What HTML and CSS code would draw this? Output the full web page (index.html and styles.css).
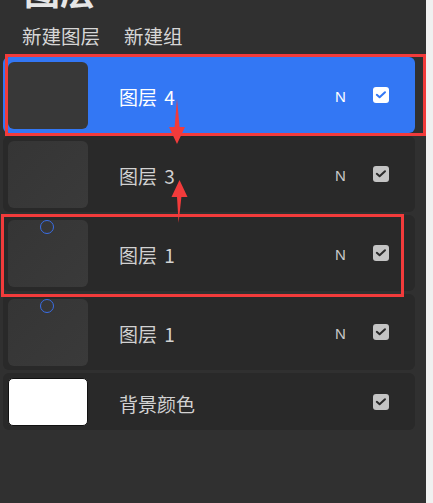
FILE: index.html
```html
<!DOCTYPE html>
<html lang="zh">
<head>
<meta charset="utf-8">
<link rel="stylesheet" href="styles.css">
</head>
<body>
<div class="page">
  <div class="main">
    <div class="title">图层</div>
    <div class="toolbar"><span>新建图层</span><span>新建组</span></div>
    <div class="list">
      <div class="row active">
        <div class="thumb"></div>
        <div class="name">图层 4</div>
        <div class="mode">N</div>
        <div class="check"><svg viewBox="0 0 16 16"><path d="M3.8 7.8 L6.6 10.2 L12 5.2"/></svg></div>
      </div>
      <div class="row">
        <div class="thumb"></div>
        <div class="name">图层 3</div>
        <div class="mode">N</div>
        <div class="check"><svg viewBox="0 0 16 16"><path d="M3.8 7.8 L6.6 10.2 L12 5.2"/></svg></div>
      </div>
      <div class="row">
        <div class="thumb"><span class="dot"></span></div>
        <div class="name">图层 1</div>
        <div class="mode">N</div>
        <div class="check"><svg viewBox="0 0 16 16"><path d="M3.8 7.8 L6.6 10.2 L12 5.2"/></svg></div>
      </div>
      <div class="row">
        <div class="thumb"><span class="dot"></span></div>
        <div class="name">图层 1</div>
        <div class="mode">N</div>
        <div class="check"><svg viewBox="0 0 16 16"><path d="M3.8 7.8 L6.6 10.2 L12 5.2"/></svg></div>
      </div>
      <div class="row bg">
        <div class="thumb white"></div>
        <div class="name">背景颜色</div>
        <div class="mode hidden">N</div>
        <div class="check"><svg viewBox="0 0 16 16"><path d="M3.8 7.8 L6.6 10.2 L12 5.2"/></svg></div>
      </div>
    </div>
  </div>
  <div class="strip"></div>

  <div class="mark mark-a"></div>
  <div class="mark mark-b"></div>
  <svg class="arrows" width="433" height="503" viewBox="0 0 433 503">
    <polygon points="177,99 179.6,127 185,127 177,144 169,127 174.6,127"/>
    <polygon points="179.5,180 187.5,197 181.4,197 178.6,223 177,197 171.5,197"/>
  </svg>
</div>
</body>
</html>
```
FILE: styles.css
```css
* { box-sizing: border-box; }
html, body { margin: 0; padding: 0; }
body {
  background: #f0f0f0;
  font-family: "Noto Sans CJK SC", "Noto Sans", sans-serif;
}
.page {
  position: relative;
  display: flex;
  width: 433px;
  height: 503px;
  overflow: hidden;
}
.main {
  width: 426px;
  height: 503px;
  background: #303030;
  display: flex;
  flex-direction: column;
}
.strip { flex: 1; background: #f0f0f0; }

.title {
  margin-top: -29px;
  margin-left: 24px;
  font-size: 36px;
  line-height: 36px;
  font-weight: 700;
  color: #e6e6e6;
}
.toolbar {
  margin-top: 19px;
  margin-left: 22px;
  display: flex;
  gap: 24px;
  font-size: 19.5px;
  line-height: 20px;
  color: #d6d6d6;
}
.list {
  margin-top: 11px;
  margin-left: 3px;
  width: 412px;
  display: flex;
  flex-direction: column;
  gap: 3px;
}
.row {
  height: 76px;
  background: #292929;
  border-radius: 6px;
  display: flex;
  align-items: center;
  padding-left: 5px;
  padding-right: 26px;
  color: #d2d2d2;
}
.row.active { background: #3377f4; color: #ffffff; }
.row.bg { height: 57px; }
.thumb {
  position: relative;
  width: 80px;
  height: 67px;
  border-radius: 6px;
  background: linear-gradient(135deg, #353535, #3a3a3a);
}
.row.active .thumb { background: #383838; }
.thumb.white {
  height: 48px;
  background: #ffffff;
  border: 1px solid #111;
  border-radius: 5px;
}
.dot {
  position: absolute;
  left: 32px;
  top: 0;
  width: 14px;
  height: 14px;
  border: 1.2px solid #3a6ee6;
  border-radius: 50%;
}
.name {
  flex: 1;
  margin-left: 31px;
  padding-top: 4px;
  font-size: 19px;
  line-height: 24px;
  word-spacing: 3px;
}
.mode {
  font-family: "Liberation Sans", sans-serif;
  font-size: 15px;
  width: 11px;
  padding-top: 2px;
  color: #c8c8c8;
}
.row.active .mode { color: #ffffff; }
.mode.hidden { visibility: hidden; }
.check {
  margin-left: 27px;
  width: 16px;
  height: 16px;
  border-radius: 3px;
  background: #c4c4c4;
}
.row.active .check { background: #ffffff; }
.check svg { display: block; width: 16px; height: 16px; }
.check path {
  fill: none;
  stroke: #2a2a2a;
  stroke-width: 2;
  stroke-linecap: round;
  stroke-linejoin: round;
}
.row.active .check path { stroke: #3377f4; }

.mark {
  position: absolute;
  border: 3px solid #f23b3b;
}
.mark-a { left: 5px; top: 54px; width: 421px; height: 82px; }
.mark-b { left: 1px; top: 214px; width: 403px; height: 83px; }
.arrows { position: absolute; left: 0; top: 0; }
.arrows polygon { fill: #f23b3b; }
```
